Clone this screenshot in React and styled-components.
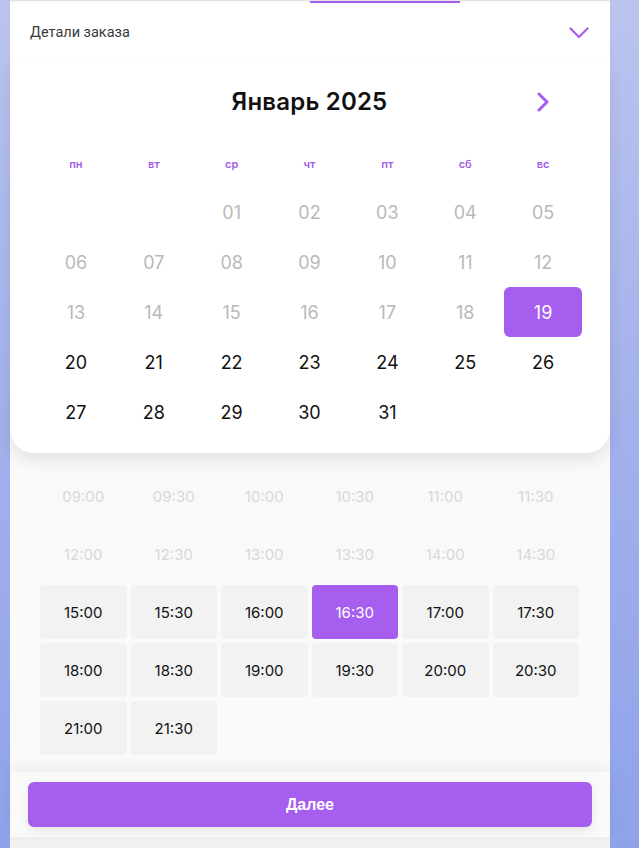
import React from "react";
import styled, { createGlobalStyle } from "styled-components";

const Global = createGlobalStyle`
  html, body {
    margin: 0;
    padding: 0;
  }
  body {
    font-family: Inter, "Noto Sans", sans-serif;
    background: linear-gradient(180deg, #bac4ee 0%, #a3b1ec 50%, #8fa2ea 100%);
    min-height: 100vh;
  }
`;

const Page = styled.div`
  display: flex;
  padding-left: 10px;
  height: 848px;
  overflow: hidden;
`;

const Panel = styled.div`
  width: 600px;
  background: #fafafa;
  display: flex;
  flex-direction: column;
`;

const TabStrip = styled.div`
  height: 2px;
  border-top: 1px solid #e2e2e2;
  background: #fafafa;
  display: flex;
`;

const TabIndicator = styled.div`
  margin-left: 300px;
  width: 150px;
  height: 2px;
  background: #a55eee;
`;

const Header = styled.div`
  height: 59px;
  background: #fff;
  display: flex;
  align-items: center;
  justify-content: space-between;
  padding: 0 21px 0 20px;
  font-family: Roboto, "Noto Sans", sans-serif;
  font-size: 14.5px;
  color: #3a3a3a;
  box-shadow: 0 2px 6px rgba(0, 0, 0, 0.03);
  position: relative;
  z-index: 1;
`;

const Calendar = styled.div`
  background: #fff;
  border-radius: 0 0 24px 24px;
  box-shadow: 0 8px 16px rgba(0, 0, 0, 0.09);
  padding: 0 28px 16px 27px;
  position: relative;
  z-index: 1;
`;

const TitleRow = styled.div`
  height: 78px;
  display: grid;
  grid-template-columns: 1fr auto 1fr;
  align-items: center;
`;

const Title = styled.div`
  font-size: 24px;
  font-weight: 600;
  color: #111;
  letter-spacing: 0.2px;
`;

const NextBtn = styled.div`
  justify-self: end;
  width: 78px;
  display: flex;
  justify-content: center;
  padding-top: 2px;
`;

const Grid7 = styled.div`
  display: grid;
  grid-template-columns: repeat(7, 1fr);
`;

const WeekDay = styled.div`
  height: 47px;
  display: flex;
  align-items: center;
  justify-content: center;
  font-size: 11px;
  font-weight: 600;
  color: #a35ee8;
`;

const Day = styled.div`
  height: 50px;
  display: flex;
  align-items: center;
  justify-content: center;
  font-size: 18px;
  border-radius: 6px;
  color: ${(p) => (p.$selected ? "#fff" : p.$past ? "#b9b9b9" : "#111")};
  background: ${(p) => (p.$selected ? "#a55eee" : "transparent")};
`;

const Times = styled.div`
  display: grid;
  grid-template-columns: repeat(6, 1fr);
  gap: 4px;
  padding: 16px 31px 17px 30px;
`;

const Slot = styled.div`
  height: 54px;
  border-radius: 4px;
  display: flex;
  align-items: center;
  justify-content: center;
  font-size: 15px;
  color: ${(p) => (p.$selected ? "#fff" : p.$disabled ? "#d8d8d8" : "#111")};
  background: ${(p) =>
    p.$selected ? "#a55eee" : p.$disabled ? "#f9f9f9" : "#f2f2f2"};
`;

const Footer = styled.div`
  background: #fafafa;
  padding: 10px 18px 10px 18px;
  box-shadow: 0 -6px 12px rgba(0, 0, 0, 0.05);
  position: relative;
`;

const NextButton = styled.button`
  width: 100%;
  height: 45px;
  border: none;
  border-radius: 6px;
  background: #a55eee;
  color: #fff;
  font-family: "Liberation Sans", Arial, sans-serif;
  font-size: 16px;
  font-weight: 700;
  box-shadow: 0 4px 10px rgba(0, 0, 0, 0.08);
`;

const BottomStrip = styled.div`
  flex: 1;
  background: #f0f0f0;
`;

const weekDays = ["пн", "вт", "ср", "чт", "пт", "сб", "вс"];

const days = [
  null, null,
  ...Array.from({ length: 31 }, (_, i) => i + 1),
];

const times = [];
for (let h = 9; h <= 21; h++) {
  times.push(`${String(h).padStart(2, "0")}:00`);
  times.push(`${String(h).padStart(2, "0")}:30`);
}

const ChevronDown = () => (
  <svg width="20" height="12" viewBox="0 0 20 12" fill="none">
    <path d="M1.5 1.5 L10 10 L18.5 1.5" stroke="#a55eee" strokeWidth="2.2" strokeLinecap="round" strokeLinejoin="round" />
  </svg>
);

const ChevronRight = () => (
  <svg width="14" height="20" viewBox="0 0 14 20" fill="none">
    <path d="M3 2 L11 10 L3 18" stroke="#a55eee" strokeWidth="3" strokeLinecap="round" strokeLinejoin="round" />
  </svg>
);

const App = () => {
  return (
    <>
      <Global />
      <Page>
        <Panel>
          <TabStrip>
            <TabIndicator />
          </TabStrip>
          <Header>
            <span>Детали заказа</span>
            <ChevronDown />
          </Header>

          <Calendar>
            <TitleRow>
              <div />
              <Title>Январь 2025</Title>
              <NextBtn>
                <ChevronRight />
              </NextBtn>
            </TitleRow>
            <Grid7>
              {weekDays.map((d) => (
                <WeekDay key={d}>{d}</WeekDay>
              ))}
            </Grid7>
            <Grid7>
              {days.map((d, i) =>
                d === null ? (
                  <Day key={"e" + i} />
                ) : (
                  <Day key={d} $past={d < 19} $selected={d === 19}>
                    {String(d).padStart(2, "0")}
                  </Day>
                )
              )}
            </Grid7>
          </Calendar>

          <Times>
            {times.map((t) => (
              <Slot
                key={t}
                $disabled={t < "15:00"}
                $selected={t === "16:30"}
              >
                {t}
              </Slot>
            ))}
          </Times>

          <Footer>
            <NextButton>Далее</NextButton>
          </Footer>
          <BottomStrip />
        </Panel>
      </Page>
    </>
  );
};

export default App;
